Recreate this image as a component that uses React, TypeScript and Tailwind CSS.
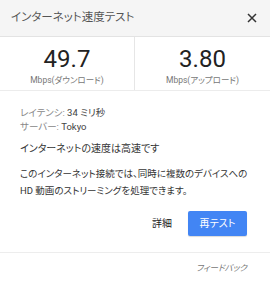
import React from "react";

const jp = "font-['Roboto','Noto_Sans_CJK_JP',sans-serif] [font-feature-settings:'palt']";

const Stat = ({ value, label, divider }: { value: string; label: string; divider?: boolean }) => (
  <div
    className={`flex flex-col items-center pt-[10px] ${divider ? "border-r border-[#e6e6e6]" : ""}`}
  >
    <span className="text-[24px] leading-[24px] text-[#222] font-['Roboto',sans-serif]">{value}</span>
    <span className="mt-[4px] text-[8.5px] leading-[10px] text-[#777]">{label}</span>
  </div>
);

const App = () => {
  return (
    <div className={`w-[270px] h-[300px] bg-white ${jp}`}>
      <header className="h-[37px] bg-[#f5f5f5] border-b border-[#e3e3e3] flex items-center justify-between pl-[11px] pr-[13px]">
        <h1 className="text-[11.5px] text-[#555] font-normal">インターネット速度テスト</h1>
        <button className="w-[10px] h-[10px] text-[#333]">
          <svg viewBox="0 0 10 10" width="10" height="10">
            <path d="M1 1L9 9M9 1L1 9" stroke="currentColor" strokeWidth="1.5" />
          </svg>
        </button>
      </header>

      <section className="grid grid-cols-2 h-[54px] border-b border-[#ececec]">
        <Stat value="49.7" label="Mbps(ダウンロード)" divider />
        <Stat value="3.80" label="Mbps(アップロード)" />
      </section>

      <main className="px-[20px] pt-[15px] text-[9.5px] leading-[14px]">
        <p className="text-[#888]">
          レイテンシ: <span className="text-[#444]">34 ミリ秒</span>
        </p>
        <p className="text-[#888]">
          サーバー: <span className="text-[#444]">Tokyo</span>
        </p>
        <p className="mt-[8px] text-[10px] text-[#333]">インターネットの速度は高速です</p>
        <p className="mt-[9px] text-[9.5px] leading-[17px] text-[#333] whitespace-nowrap">
          このインターネット接続では、同時に複数のデバイスへの
          <br />
          HD 動画のストリーミングを処理できます。
        </p>

        <div className="flex items-center justify-end gap-[16px] mt-[12px] pr-[3px]">
          <button className="text-[10px] text-[#222]">詳細</button>
          <button className="w-[59px] h-[25px] rounded-[2px] bg-[#4285f4] text-white text-[10px] shadow-[0_1px_1px_rgba(0,0,0,0.15)]">
            再テスト
          </button>
        </div>
      </main>

      <footer className="mt-[16px] border-t border-[#ededed] flex justify-end pr-[23px] pt-[9px]">
        <span className="text-[8.5px] italic text-[#777]">フィードバック</span>
      </footer>
    </div>
  );
};

export default App;
